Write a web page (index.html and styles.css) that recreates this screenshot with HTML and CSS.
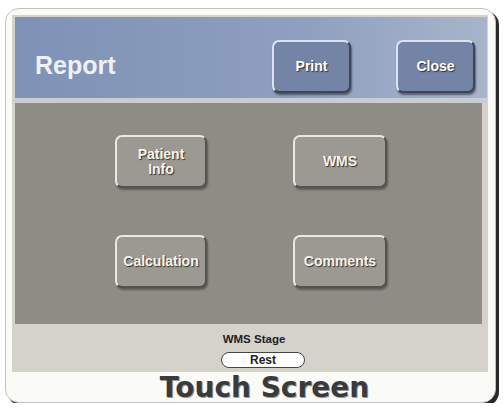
FILE: index.html
```html
<!DOCTYPE html>
<html lang="en">
<head>
    <meta charset="UTF-8">
    <title>Report</title>
    <link rel="stylesheet" href="styles.css">
</head>
<body>
    <div class="device">
        <div class="screen">
            <!-- title bar -->
            <div class="header">
                <h1 class="title">Report</h1>
                <button class="btn btn-blue btn-print">Print</button>
                <button class="btn btn-blue">Close</button>
            </div>

            <!-- main menu -->
            <div class="panel">
                <button class="btn btn-gray">Patient<br>Info</button>
                <button class="btn btn-gray">WMS</button>
                <button class="btn btn-gray">Calculation</button>
                <button class="btn btn-gray">Comments</button>
            </div>

            <!-- status line -->
            <div class="status">
                <div class="status-label">WMS Stage</div>
                <div class="status-value">Rest</div>
            </div>
        </div>
        <div class="caption">Touch Screen</div>
    </div>
</body>
</html>
```

FILE: styles.css
```css
body {
    margin: 0;
    padding: 0;
    background: #fff;
    font-family: "Liberation Sans", Arial, sans-serif;
}

.device {
    box-sizing: border-box;
    margin: 8px 0 0 5px;
    width: 491px;
    height: 395px;
    border: 1px solid #c2c2bd;
    border-radius: 14px;
    background: #fafaf7;
    box-shadow: 3px 3px 0 #2a2a2a;
    padding: 6px 0 0 6px;
}

.screen {
    width: 476px;
    height: 357px;
    background: #d5d3c9;
    padding: 2px 0 0 3px;
    box-sizing: border-box;
    display: flex;
    flex-direction: column;
}

/* Title bar */
.header {
    height: 86px;
    margin-right: 1px;
    box-sizing: border-box;
    display: flex;
    align-items: flex-start;
    padding: 23px 12px 0 20px;
    background: linear-gradient(90deg, #7f91b5 0%, #8e9fbf 60%, #a7b4cb 100%);
    border-bottom: 5px solid #c9cdd3;
}

.title {
    margin: 10px 0 0 0;
    font-size: 25px;
    line-height: 30px;
    font-weight: bold;
    color: #eef1f6;
}

.btn {
    box-sizing: border-box;
    border-radius: 7px;
    border: 2px solid;
    font-family: "Liberation Sans", Arial, sans-serif;
    font-weight: bold;
    font-size: 14px;
    line-height: 15px;
    color: #fff;
    text-shadow: 1px 1px 1px #333;
    padding: 0;
    cursor: pointer;
}

.btn-blue {
    width: 79px;
    height: 53px;
    background: #7384a6;
    border-color: #dde3ee #3d4556 #3d4556 #dde3ee;
    box-shadow: 1px 2px 2px rgba(0, 0, 0, 0.45);
}

.btn-print {
    margin-left: auto;
    margin-right: 45px;
}

/* Main menu */
.panel {
    width: 467px;
    height: 221px;
    box-sizing: border-box;
    background: #8f8c86;
    display: grid;
    grid-template-columns: 92px 94px;
    grid-auto-rows: 53px;
    column-gap: 86px;
    row-gap: 47px;
    padding: 32px 0 0 100px;
}

.btn-gray {
    background: #9c9992;
    border-color: #ebe9e3 #55534e #55534e #ebe9e3;
    box-shadow: 1px 2px 2px rgba(0, 0, 0, 0.35);
    color: #f4f3ef;
}

/* Status line */
.status {
    flex: 1;
    margin-left: -3px;
    text-align: center;
    padding-top: 9px;
    box-sizing: border-box;
}

.status-label {
    font-size: 11.5px;
    font-weight: bold;
    color: #222;
    padding-left: 8px;
    line-height: 13px;
}

.status-value {
    box-sizing: border-box;
    width: 84px;
    height: 16px;
    margin: 6px 0 0 209px;
    border: 1px solid #444;
    border-radius: 8px;
    background: #fff;
    font-size: 12px;
    font-weight: bold;
    line-height: 14px;
    color: #222;
    text-align: center;
}

.caption {
    font-family: "DejaVu Sans", Verdana, sans-serif;
    font-size: 28px;
    font-weight: bold;
    line-height: 30px;
    color: #3a3a3a;
    text-shadow: 1px 1px 0 #9a9a9a;
    text-align: center;
    padding: 0 0 0 22px;
    margin-top: 1px;
}
```
